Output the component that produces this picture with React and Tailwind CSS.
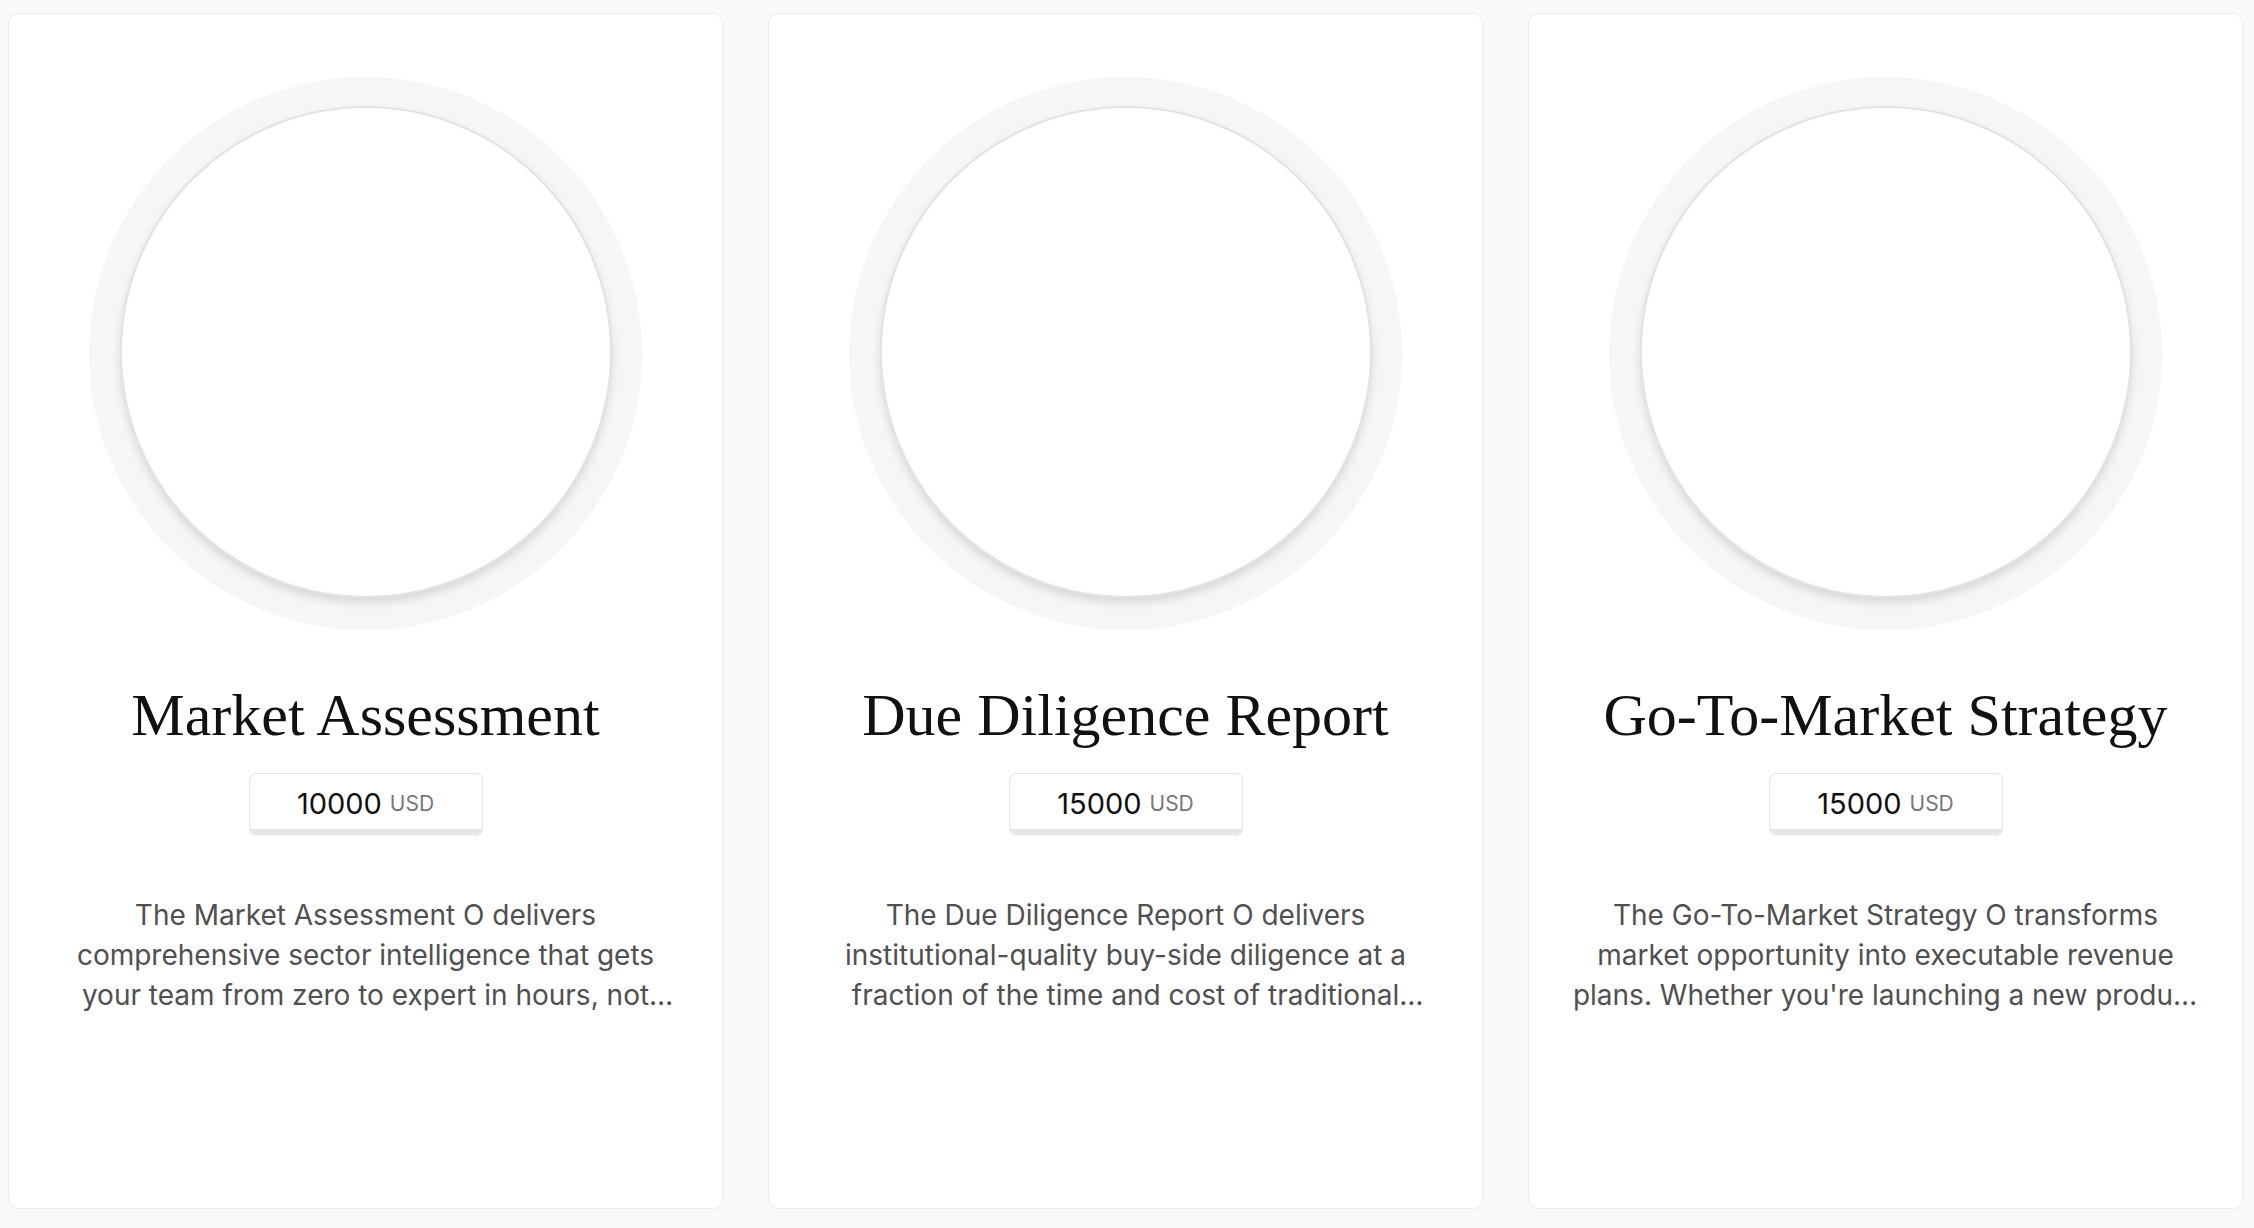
const SERVICES = [
  {
    title: 'Market Assessment',
    price: 10000,
    description:
      'The Market Assessment O delivers comprehensive sector intelligence that gets your team from zero to expert in hours, not weeks. Built for investors and operators who need answers fast.',
  },
  {
    title: 'Due Diligence Report',
    price: 15000,
    description:
      'The Due Diligence Report O delivers institutional-quality buy-side diligence at a fraction of the time and cost of traditional consulting engagements.',
  },
  {
    title: 'Go-To-Market Strategy',
    price: 15000,
    description:
      "The Go-To-Market Strategy O transforms market opportunity into executable revenue plans. Whether you're launching a new product or entering a new market.",
  },
]

function ServiceCard({ service }) {
  return (
    <div className="flex h-[1196px] flex-col items-center rounded-[10px] border border-[#ececec] bg-white pt-[63px]">
      {/* image slot */}
      <div className="flex h-[553px] w-[553px] items-center justify-center rounded-full bg-[#f6f6f6]">
        <div className="mb-[3px] h-[492px] w-[492px] rounded-full border-2 border-[#e3e3e3] bg-white shadow-[0_5px_8px_rgba(0,0,0,0.12)]" />
      </div>

      <h2 className="mt-[49px] text-center font-['Liberation_Serif',serif] text-[60px] leading-[72px] text-[#111]">
        {service.title}
      </h2>

      <div className="mt-[22px] flex h-[62px] w-[234px] items-center justify-center gap-[8px] rounded-[7px] border border-b-[6px] border-[#e6e6e6] bg-white pt-[4px] font-['Inter',sans-serif] shadow-[0_1px_2px_rgba(0,0,0,0.05)]">
        <span className="text-[29px] text-[#111]">{service.price}</span>
        <span className="text-[21px] text-[#777]">USD</span>
      </div>

      <p className="mt-[60px] line-clamp-3 px-[42px] text-center font-['Inter',sans-serif] text-[28px] leading-[40px] text-[#505050]">
        {service.description}
      </p>
    </div>
  )
}

export default function App() {
  return (
    <div className="min-h-screen bg-[#f9f9f9] pl-[8px] pr-[11px] pt-[13px] pb-[20px]">
      <div className="grid grid-cols-3 gap-[45px]">
        {SERVICES.map(s => (
          <ServiceCard key={s.title} service={s} />
        ))}
      </div>
    </div>
  )
}
